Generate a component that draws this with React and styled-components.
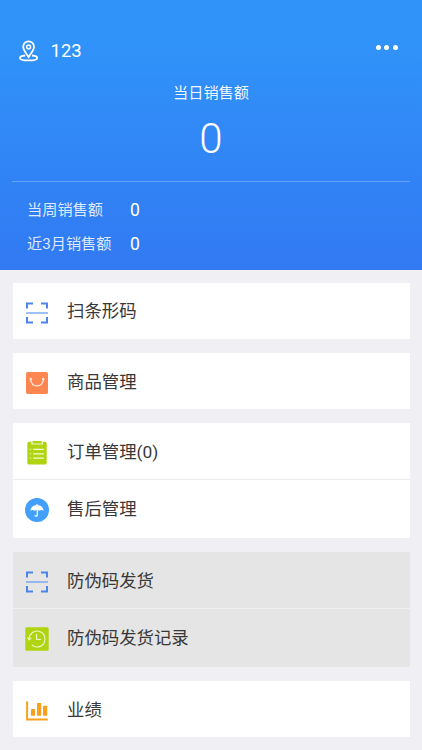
import styled, { createGlobalStyle } from "styled-components";

const GlobalStyle = createGlobalStyle`
  * {
    box-sizing: border-box;
  }
  body {
    margin: 0;
    background: #efeff4;
  }
`;

const Page = styled.div`
  height: 750px;
  overflow: hidden;
  background: #efeff4;
  font-family: Roboto, "Noto Sans CJK SC", sans-serif;
  color: #383838;
`;

const Header = styled.header`
  height: 269.5px;
  padding: 34px 12px 0;
  background: linear-gradient(#3093fa, #3093fa 15%, #3279f2);
  color: white;
`;

const TopBar = styled.div`
  display: flex;
  align-items: center;
  height: 33px;
  padding: 0 12px 0 7px;
`;

const ShopName = styled.div`
  margin-left: 11.5px;
  padding-top: 2px;
  font-size: 18.5px;
  line-height: 31px;
`;

const More = styled.div`
  display: flex;
  gap: 3.7px;
  margin: -6px 0 0 auto;
`;

const Dot = styled.span`
  width: 5px;
  height: 5px;
  border-radius: 50%;
  background: white;
`;

const Today = styled.div`
  display: flex;
  flex-direction: column;
  align-items: center;
  height: 114.5px;
  padding-top: 15px;
  border-bottom: 1px solid rgba(255, 255, 255, 0.25);
`;

const TodayLabel = styled.div`
  font-size: 15.2px;
  line-height: 22px;
  color: rgba(255, 255, 255, 0.95);
`;

const TodayValue = styled.div`
  margin-top: 10px;
  font-size: 42px;
  font-weight: 300;
  line-height: 50px;
`;

const Totals = styled.div`
  display: flex;
  flex-direction: column;
  padding: 11px 15px 0;
`;

const TotalRow = styled.div`
  display: flex;
  align-items: center;
  height: 34px;
`;

const TotalLabel = styled.div`
  width: 103px;
  margin-top: -3px;
  font-size: 15.2px;
  color: rgba(255, 255, 255, 0.85);
`;

const TotalValue = styled.div`
  font-size: 17.5px;
`;

const Menu = styled.main`
  display: flex;
  flex-direction: column;
  gap: 14.3px;
  padding: 13px 12px 0 13px;
`;

const MenuItem = styled.div`
  display: flex;
  align-items: center;
  height: 56px;
  padding: 4px 12px 0;
`;

const Card = styled.section`
  background: ${props => props.$disabled ? "#e5e5e5" : "white"};

  ${MenuItem} + ${MenuItem} {
    height: 58.6px;
    padding-top: 3.2px;
    border-top: 1px solid ${props => props.$disabled ? "#f0f0f2" : "#ededf0"};
  }
`;

const IconBox = styled.span`
  display: flex;
  justify-content: center;
  width: 24px;
  margin-right: 18px;

  svg {
    display: block;
  }
`;

const Label = styled.span`
  margin-top: -2.4px;
  font-size: 17.4px;
  line-height: 26px;
`;

const LocationIcon = () => (
  <svg width="20" height="22" viewBox="0 0 20 22" fill="none" stroke="#fff" strokeWidth="1.8">
    <path d="M9.6 17C7.6 13.4 4.2 10.4 4.2 6.8A5.4 5.4 0 0 1 15 6.8C15 10.4 11.6 13.4 9.6 17Z" />
    <circle cx="9.6" cy="7" r="1.9" strokeWidth="1.5" />
    <path d="M6.2 15.5C3 15.8 1 16.7 1 17.9C1 19.4 4.8 20.4 9.6 20.4S18.2 19.4 18.2 17.9C18.2 16.7 16.2 15.8 13 15.5" />
  </svg>
);

const ScanIcon = () => (
  <svg width="22" height="22" viewBox="0 0 22 22" fill="none" stroke="#4a86e8" strokeWidth="2">
    <path d="M1 6.5V1.5H7M15 1.5H21V6.5M21 15V20.5H15M7 20.5H1V15" />
    <path d="M0 11H22" strokeWidth="1.3" stroke="#6aa0f0" />
  </svg>
);

const BagIcon = () => (
  <svg width="22" height="22" viewBox="0 0 22 22">
    <rect width="22" height="22" rx="1.8" fill="#ff8551" />
    <path d="M4.6 7.2C5 11.4 7.6 13.8 11 13.8S17 11.4 17.4 7.2" fill="none" stroke="#ffeadf" strokeWidth="1.3" />
    <circle cx="4.7" cy="7" r="1.3" fill="#ffeadf" />
    <circle cx="17.3" cy="7" r="1.3" fill="#ffeadf" />
  </svg>
);

const OrderIcon = () => (
  <svg width="20" height="24" viewBox="0 0 20 24">
    <rect x="0.3" y="0.8" width="19.4" height="22.6" rx="1.6" fill="#b0d410" />
    <path d="M5 0V3H15.3V0" fill="#b0d410" stroke="#f1f8d2" strokeWidth="1.2" />
    <path d="M6.2 8.4H16.8M6.2 12.8H16.8M6.2 17.2H16.8" stroke="#f4fadc" strokeWidth="1.2" />
    <path d="M2.6 8.4H4.2M2.6 12.8H4.2M2.6 17.2H4.2" stroke="#e2f0a4" strokeWidth="1.3" />
  </svg>
);

const UmbrellaIcon = () => (
  <svg width="24" height="24" viewBox="0 0 24 24">
    <circle cx="12" cy="12" r="12" fill="#429ffc" />
    <path d="M5.4 12.8C5.7 9.3 8.2 7.2 11.4 6.9V6H12.6V6.9C15.8 7.2 18.3 9.3 18.6 12.8C17.5 11.8 15.5 11.8 14.4 12.8C13.2 11.8 10.8 11.8 9.6 12.8C8.5 11.8 6.5 11.8 5.4 12.8Z" fill="#fff" />
    <path d="M12.3 12V17Q12.2 18.3 11 18.2Q10 18.1 10 17" fill="none" stroke="#fff" strokeWidth="1.2" />
  </svg>
);

const HistoryIcon = () => (
  <svg width="24" height="24" viewBox="0 0 24 24">
    <rect x="0.3" y="0.3" width="23.4" height="23.4" rx="1.5" fill="#b0d410" />
    <path d="M4.1 12A8 8 0 1 1 6.8 18" fill="none" stroke="#eef6c8" strokeWidth="1.1" />
    <path d="M2.5 10.3L4.1 12.8L6.3 10.8" fill="none" stroke="#eef6c8" strokeWidth="1.1" />
    <path d="M11.5 7V12.5H16" fill="none" stroke="#eef6c8" strokeWidth="1.2" />
  </svg>
);

const ChartIcon = () => (
  <svg width="22" height="20" viewBox="0 0 22 20" fill="#f8a01c">
    <path d="M1.1 0.5V18.4H21.8" fill="none" stroke="#f8a01c" strokeWidth="2" />
    <rect x="5" y="8" width="4" height="6.8" rx="0.5" />
    <rect x="11" y="2" width="4.2" height="12.8" rx="0.5" />
    <rect x="17" y="4.7" width="4.2" height="10.1" rx="0.5" />
  </svg>
);

const groups = [
  { items: [{ label: "扫条形码", Icon: ScanIcon }] },
  { items: [{ label: "商品管理", Icon: BagIcon }] },
  {
    items: [
      { label: "订单管理(0)", Icon: OrderIcon },
      { label: "售后管理", Icon: UmbrellaIcon },
    ],
  },
  {
    disabled: true,
    items: [
      { label: "防伪码发货", Icon: ScanIcon },
      { label: "防伪码发货记录", Icon: HistoryIcon },
    ],
  },
  { items: [{ label: "业绩", Icon: ChartIcon }] },
];

const App = () => {
  return (
    <Page>
      <GlobalStyle />
      <Header>
        <TopBar>
          <LocationIcon />
          <ShopName>123</ShopName>
          <More>
            <Dot />
            <Dot />
            <Dot />
          </More>
        </TopBar>
        <Today>
          <TodayLabel>当日销售额</TodayLabel>
          <TodayValue>0</TodayValue>
        </Today>
        <Totals>
          <TotalRow>
            <TotalLabel>当周销售额</TotalLabel>
            <TotalValue>0</TotalValue>
          </TotalRow>
          <TotalRow>
            <TotalLabel>近3月销售额</TotalLabel>
            <TotalValue>0</TotalValue>
          </TotalRow>
        </Totals>
      </Header>
      <Menu>
        {groups.map(({ items, disabled }) => (
          <Card key={items[0].label} $disabled={disabled}>
            {items.map(({ label, Icon }) => (
              <MenuItem key={label}>
                <IconBox>
                  <Icon />
                </IconBox>
                <Label>{label}</Label>
              </MenuItem>
            ))}
          </Card>
        ))}
      </Menu>
    </Page>
  );
};

export default App;
